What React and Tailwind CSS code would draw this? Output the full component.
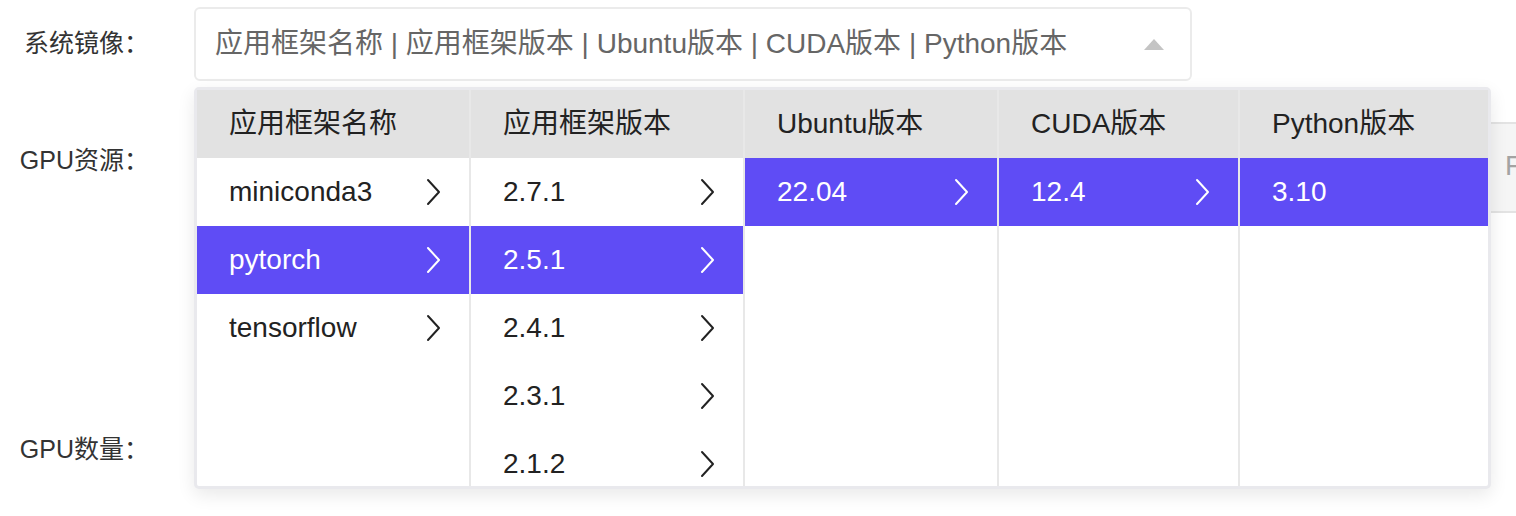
import React from 'react'

const COLUMNS = [
  { title: '应用框架名称', width: 'w-[274px] border-r-2', items: ['miniconda3', 'pytorch', 'tensorflow'], active: 1, arrow: true },
  { title: '应用框架版本', width: 'w-[274px] border-r-2', items: ['2.7.1', '2.5.1', '2.4.1', '2.3.1', '2.1.2'], active: 1, arrow: true },
  { title: 'Ubuntu版本', width: 'w-[254px] border-r-2', items: ['22.04'], active: 0, arrow: true },
  { title: 'CUDA版本', width: 'w-[241px] border-r-2', items: ['12.4'], active: 0, arrow: true },
  { title: 'Python版本', width: 'flex-1', items: ['3.10'], active: 0, arrow: false },
]

function Chevron({ className }) {
  return (
    <svg width="16" height="28" viewBox="0 0 16 28" fill="none" className={className}>
      <path d="M3 2 L14 14 L3 26" stroke="currentColor" strokeWidth="2" strokeLinecap="round" strokeLinejoin="round" />
    </svg>
  )
}

function CascadeColumn({ col }) {
  return (
    <div className={`${col.width} shrink-0 border-[#e8e8e8] flex flex-col`}>
      <div className="h-[68px] shrink-0 bg-[#e2e2e2] flex items-center pl-[32px] text-[#222]">{col.title}</div>
      {col.items.map((item, i) => {
        const on = i === col.active
        return (
          <div
            key={item}
            className={`h-[68px] shrink-0 flex items-center justify-between pl-[32px] pr-[28px] ${on ? 'bg-[#5f4cf5] text-white' : 'bg-white text-[#222]'}`}
          >
            <span>{item}</span>
            {col.arrow && <Chevron className={on ? 'text-white' : 'text-[#222]'} />}
          </div>
        )
      })}
    </div>
  )
}

export default function App() {
  return (
    <div
      className="relative w-[1516px] h-[516px] overflow-hidden bg-white"
      style={{ fontFamily: '"Liberation Sans", "Noto Sans CJK SC", sans-serif' }}
    >
      {/* 系统镜像 */}
      <div className="flex items-center pt-[7px]">
        <div className="w-[160px] shrink-0 text-right text-[25px] text-[#333] pr-[11px]">系统镜像：</div>
        <div className="relative ml-[34px]">
          <div className="w-[998px] h-[74px] border-2 border-[#ebebeb] rounded-[6px] flex items-center justify-between pl-[19px] pr-[26px] text-[28px] text-[#666]">
            <span>应用框架名称 | 应用框架版本 | Ubuntu版本 | CUDA版本 | Python版本</span>
            <svg width="20" height="11" viewBox="0 0 20 11">
              <polygon points="10,0 20,11 0,11" fill="#c4c4c4" />
            </svg>
          </div>

          {/* cascader dropdown */}
          <div className="absolute left-0 top-full mt-[6px] z-10 w-[1297px] border-[3px] border-[#e9e9ed] rounded-[5px] bg-white shadow-[0_6px_18px_rgba(0,0,0,0.09)]">
            <div className="h-[396px] overflow-hidden flex text-[28px]">
              {COLUMNS.map(col => (
                <CascadeColumn key={col.title} col={col} />
              ))}
            </div>
          </div>
        </div>
      </div>

      {/* GPU资源 */}
      <div className="flex items-start mt-[41px]">
        <div className="w-[160px] shrink-0 text-right text-[25px] text-[#333] pr-[11px] mt-[20px]">GPU资源：</div>
        <div className="ml-[34px] w-[1400px] h-[91px] shrink-0 border-y-2 border-[#e3e3e3] bg-[#f5f5f5] flex items-center pl-[1311px] text-[28px] text-[#a3a3a3] whitespace-nowrap">
          <span className="-mt-[4px]">FP32算力</span>
        </div>
      </div>

      {/* GPU数量 */}
      <div className="flex items-start mt-[218px]">
        <div className="w-[160px] shrink-0 text-right text-[25px] text-[#333] pr-[11px]">GPU数量：</div>
      </div>
    </div>
  )
}
